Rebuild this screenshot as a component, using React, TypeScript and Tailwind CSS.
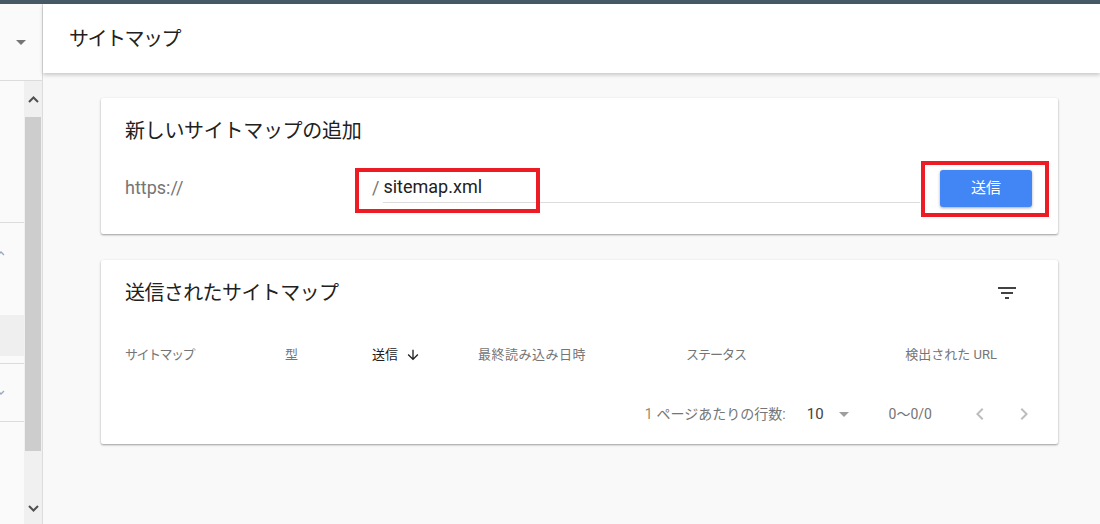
import React from "react";

const font = { fontFamily: "Roboto, 'Noto Sans CJK JP', sans-serif" };

function Caret({ className }: { className?: string }) {
    return (
        <svg width="10" height="5" viewBox="0 0 10 5" className={className}>
            <path d="M0 0h10L5 5z" fill="currentColor" />
        </svg>
    );
}

function Sidebar() {
    return (
        <div className="w-[43px] shrink-0 flex flex-col bg-[#fafafa] border-r border-[#dcdcdc]">
            <div className="h-[77px] flex items-center justify-center border-b border-[#dcdcdc] text-[#757575]">
                <Caret />
            </div>
            <div className="flex flex-1">
                <div className="w-[24px] flex flex-col">
                    <div className="h-[142px] border-b border-[#dcdcdc]" />
                    <div className="h-[92px] relative">
                        <svg width="8" height="6" viewBox="0 0 8 6" className="absolute left-[-3px] top-[27px] text-[#9aa7c0]">
                            <path d="M1 5l3-3 3 3" stroke="currentColor" strokeWidth="1.3" fill="none" />
                        </svg>
                    </div>
                    <div className="h-[41px] bg-[#efefef]" />
                    <div className="h-[8px] border-b border-[#dcdcdc]" />
                    <div className="h-[58px] relative border-b border-[#dcdcdc]">
                        <svg width="8" height="6" viewBox="0 0 8 6" className="absolute left-[-3px] top-[26px] text-[#9aa7c0]">
                            <path d="M1 1l3 3 3-3" stroke="currentColor" strokeWidth="1.3" fill="none" />
                        </svg>
                    </div>
                    <div className="flex-1" />
                </div>
                <div className="w-[18px] bg-[#f0f0f0] flex flex-col items-center">
                    <div className="h-[36px] flex items-center justify-center">
                        <svg width="11" height="7" viewBox="0 0 11 7">
                            <path d="M1 6l4.5-4.5L10 6" stroke="#505050" strokeWidth="2" fill="none" />
                        </svg>
                    </div>
                    <div className="w-[16px] h-[334px] bg-[#cdcdcd]" />
                    <div className="flex-1 flex items-end justify-center pb-[12px]">
                        <svg width="11" height="7" viewBox="0 0 11 7">
                            <path d="M1 1l4.5 4.5L10 1" stroke="#505050" strokeWidth="2" fill="none" />
                        </svg>
                    </div>
                </div>
            </div>
        </div>
    );
}

function AddCard() {
    return (
        <div className="relative bg-white rounded-[2px] shadow-[0_1px_2px_rgba(0,0,0,0.3),0_1px_3px_rgba(0,0,0,0.1)] pt-[19px] pb-[27px] pl-[24px] pr-[26px]">
            <div className="text-[20px] leading-[28px] text-[#212121] tracking-[-0.3px]">新しいサイトマップの追加</div>
            <div className="mt-[25px] flex items-start h-[37px]">
                <div className="w-[247px] h-[34px] flex items-center text-[18px] text-[#757575]">https://</div>
                <div className="flex-1 flex items-start">
                    <span className="h-[34px] flex items-center text-[18px] text-[#757575] mr-[4px]">/</span>
                    <div className="flex-1 border-b border-[#dcdcdc] h-[33px] flex items-center">
                        <span className="text-[18px] text-[#212121]">sitemap.xml</span>
                    </div>
                </div>
                <button className="ml-[20px] w-[92px] h-[37px] rounded-[3px] bg-[#4285f4] text-white text-[15px] shadow-[0_1px_3px_rgba(0,0,0,0.35)]">
                    送信
                </button>
            </div>
            <div className="absolute left-[254px] top-[70px] w-[185px] h-[45px] border-[4px] border-[#ed1c24]" />
            <div className="absolute left-[820px] top-[63px] w-[128px] h-[56px] border-[4px] border-[#ed1c24]" />
        </div>
    );
}

function ListCard() {
    return (
        <div className="bg-white rounded-[2px] shadow-[0_1px_2px_rgba(0,0,0,0.3),0_1px_3px_rgba(0,0,0,0.1)] mt-[26px] pt-[19px] pb-[18px]">
            <div className="flex items-center pl-[24px] pr-[39px]">
                <div className="text-[20px] leading-[28px] text-[#212121] tracking-[-0.6px]">送信されたサイトマップ</div>
                <svg width="24" height="24" viewBox="0 0 24 24" className="ml-auto text-[#424242]">
                    <path d="M10 18h4v-2h-4v2zM3 6v2h18V6H3zm3 7h12v-2H6v2z" fill="currentColor" />
                </svg>
            </div>
            <div className="flex items-center h-[20px] mt-[38px] pl-[24px] pr-[61px] text-[13px] text-[#757575]">
                <div className="w-[160px] tracking-[-1.5px]">サイトマップ</div>
                <div className="w-[87px]">型</div>
                <div className="w-[106px] flex items-center text-[#212121]">
                    送信
                    <svg width="16" height="16" viewBox="0 0 24 24" className="ml-[7px]">
                        <path d="M20 12l-1.41-1.41L13 16.17V4h-2v12.17l-5.58-5.59L4 12l8 8 8-8z" fill="#212121" />
                    </svg>
                </div>
                <div className="w-[208px] tracking-[0.5px]">最終読み込み日時</div>
                <div className="tracking-[-1px]">ステータス</div>
                <div className="ml-auto">検出された URL</div>
            </div>
            <div className="flex items-center justify-end h-[24px] mt-[37px] pr-[22px] text-[14px] text-[#757575]">
                <span className="text-[#9e8a6e]">1</span>
                <span className="ml-[4px]">ページあたりの行数:</span>
                <span className="ml-[21px] text-[15px] text-[#424242]">10</span>
                <Caret className="ml-[15px] text-[#9e9e9e]" />
                <span className="ml-[40px]">0〜0/0</span>
                <svg width="24" height="24" viewBox="0 0 24 24" className="ml-[36px] text-[#bdbdbd]">
                    <path d="M15.41 7.41L14 6l-6 6 6 6 1.41-1.41L10.83 12z" fill="currentColor" />
                </svg>
                <svg width="24" height="24" viewBox="0 0 24 24" className="ml-[20px] text-[#bdbdbd]">
                    <path d="M10 6L8.59 7.41 13.17 12l-4.58 4.59L10 18l6-6z" fill="currentColor" />
                </svg>
            </div>
        </div>
    );
}

export default function App() {
    return (
        <div style={font} className="w-full h-[524px] flex flex-col overflow-hidden bg-[#f9f9f9]">
            <div className="h-[4px] bg-[#455a64] shrink-0" />
            <div className="flex flex-1 min-h-0">
                <Sidebar />
                <div className="flex-1 flex flex-col">
                    <div className="h-[69px] bg-white flex items-center pl-[26px] shadow-[0_2px_4px_rgba(0,0,0,0.2)] relative z-10">
                        <h1 className="text-[20px] text-[#212121] tracking-[-1.5px]">サイトマップ</h1>
                    </div>
                    <div className="pt-[25px] pl-[58px] pr-[42px]">
                        <AddCard />
                        <ListCard />
                    </div>
                </div>
            </div>
        </div>
    );
}
